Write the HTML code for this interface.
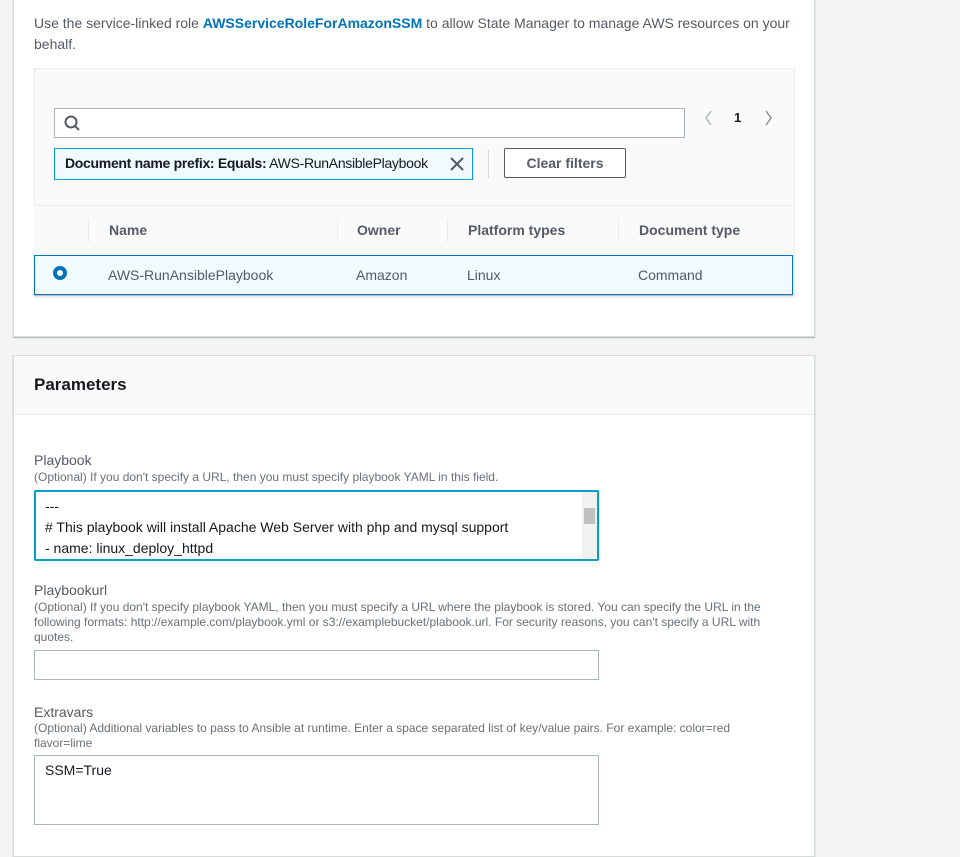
<!DOCTYPE html>
<html><head><style>
body{margin:0;width:960px;height:838px;background:#f2f3f3;font-family:"Liberation Sans",sans-serif;color:#16191f;position:relative;overflow:hidden;font-size:13.5px}
.a{position:absolute}
.panel{background:#fff;border:1px solid #d5dbdb;box-shadow:0 1px 1px rgba(0,28,36,.3)}
.sub{color:#687078;font-size:12px;line-height:15px}
.inp{border:1px solid #aab7b8;background:#fff}
</style></head><body>
<div class="a panel" style="left:13px;top:-2px;width:800px;height:337px"></div>
<div class="a" style="left:34px;top:13px;width:770px;line-height:21px;color:#545b64;font-size:14px">Use the service-linked role <b style="color:#0073bb">AWSServiceRoleForAmazonSSM</b> to allow State Manager to manage AWS resources on your behalf.</div>
<div class="a" style="left:34px;top:68px;width:759px;height:228px;background:#fafafa;border:1px solid #eaeded"></div>
<div class="a inp" style="left:54px;top:108px;width:629px;height:28px"></div>
<svg class="a" style="left:63px;top:114px" width="18" height="18"><circle cx="8" cy="8" r="5.5" fill="none" stroke="#545b64" stroke-width="2"/><line x1="12" y1="12" x2="16" y2="16" stroke="#545b64" stroke-width="2"/></svg>
<svg class="a" style="left:702px;top:109px" width="80" height="18"><path d="M9 2 L4 9 L9 16" fill="none" stroke="#aab7b8" stroke-width="1.5"/><path d="M64 2 L69 9 L64 16" fill="none" stroke="#879596" stroke-width="1.5"/></svg>
<div class="a" style="left:734px;top:110px;font-weight:bold;font-size:13px">1</div>
<div class="a" style="left:54px;top:148px;width:417px;height:30px;background:#f1faff;border:1px solid #00a1c9"></div>
<div class="a" style="left:65px;top:155px;font-size:14px;white-space:nowrap;letter-spacing:-.3px"><b>Document name prefix: Equals:</b> AWS-RunAnsiblePlaybook</div>
<svg class="a" style="left:449px;top:156px" width="16" height="16"><path d="M2 2L14 14M14 2L2 14" stroke="#545b64" stroke-width="2"/></svg>
<div class="a" style="left:488px;top:150px;width:1px;height:28px;background:#d5dbdb"></div>
<div class="a" style="left:504px;top:148px;width:120px;height:28px;border:1px solid #545b64;border-radius:2px;background:#fff;text-align:center;line-height:28px;font-weight:bold;color:#545b64;font-size:14px">Clear filters</div>
<div class="a" style="left:34px;top:205px;width:759px;height:1px;background:#eaeded"></div>
<div class="a" style="left:34px;top:206px;width:759px;height:49px;background:#fafafa"></div>
<div class="a" style="left:88px;top:218px;width:1px;height:24px;background:#eaeded"></div>
<div class="a" style="left:337px;top:218px;width:1px;height:24px;background:#eaeded"></div>
<div class="a" style="left:447px;top:218px;width:1px;height:24px;background:#eaeded"></div>
<div class="a" style="left:618px;top:218px;width:1px;height:24px;background:#eaeded"></div>
<div class="a" style="left:109px;top:222px;font-weight:bold;color:#545b64;font-size:14px">Name</div>
<div class="a" style="left:357px;top:222px;font-weight:bold;color:#545b64;font-size:14px">Owner</div>
<div class="a" style="left:468px;top:222px;font-weight:bold;color:#545b64;font-size:14px">Platform types</div>
<div class="a" style="left:639px;top:222px;font-weight:bold;color:#545b64;font-size:14px">Document type</div>
<div class="a" style="left:34px;top:255px;width:757px;height:38px;background:#f1faff;border:1px solid #0073bb;box-shadow:0 1px 1px rgba(0,0,0,.3)"></div>
<div class="a" style="left:53px;top:266px;width:6px;height:6px;border:4px solid #0073bb;border-radius:50%;background:#fff"></div>
<div class="a" style="left:108px;top:267px;color:#545b64;font-size:14px">AWS-RunAnsiblePlaybook</div>
<div class="a" style="left:356px;top:267px;color:#545b64;font-size:14px">Amazon</div>
<div class="a" style="left:467px;top:267px;color:#545b64;font-size:14px">Linux</div>
<div class="a" style="left:638px;top:267px;color:#545b64;font-size:14px">Command</div>

<div class="a panel" style="left:13px;top:355px;width:800px;height:500px"></div>
<div class="a" style="left:14px;top:356px;width:800px;height:58px;background:#fafafa;border-bottom:1px solid #eaeded"></div>
<div class="a" style="left:34px;top:375px;font-size:17px;font-weight:bold">Parameters</div>

<div class="a" style="left:34px;top:452px;color:#545b64;font-size:14px">Playbook</div>
<div class="a sub" style="left:34px;top:470px">(Optional) If you don't specify a URL, then you must specify playbook YAML in this field.</div>
<div class="a" style="left:34px;top:490px;width:561px;height:67px;border:2px solid #00a1c9;background:#fff;border-radius:2px"></div>
<div class="a" style="left:45px;top:496px;line-height:21px;font-size:14px">---<br># This playbook will install Apache Web Server with php and mysql support<br>- name: linux_deploy_httpd</div>
<div class="a" style="left:582px;top:492px;width:15px;height:66px;background:#f1f1f1"></div>
<div class="a" style="left:584px;top:508px;width:11px;height:16px;background:#c1c1c1"></div>

<div class="a" style="left:34px;top:582px;color:#545b64;font-size:14px">Playbookurl</div>
<div class="a sub" style="left:34px;top:600px;width:745px">(Optional) If you don't specify playbook YAML, then you must specify a URL where the playbook is stored. You can specify the URL in the following formats: http://example.com/playbook.yml or s3://examplebucket/plabook.url. For security reasons, you can't specify a URL with quotes.</div>
<div class="a inp" style="left:34px;top:650px;width:563px;height:28px"></div>

<div class="a" style="left:34px;top:704px;color:#545b64;font-size:14px">Extravars</div>
<div class="a sub" style="left:34px;top:721px;width:720px">(Optional) Additional variables to pass to Ansible at runtime. Enter a space separated list of key/value pairs. For example: color=red flavor=lime</div>
<div class="a inp" style="left:34px;top:755px;width:563px;height:68px"></div>
<div class="a" style="left:45px;top:762px;font-size:14px">SSM=True</div>
</body></html>
